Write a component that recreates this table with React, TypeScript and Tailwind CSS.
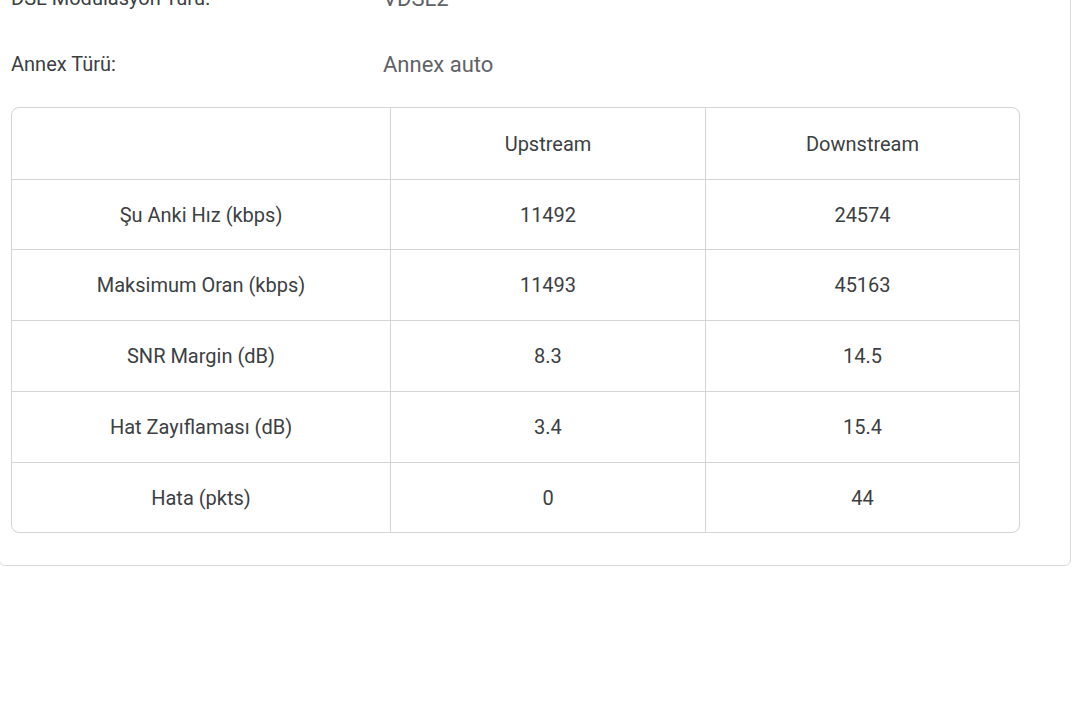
import React from 'react'

const rows: Array<[string, string, string]> = [
  ['Şu Anki Hız (kbps)', '11492', '24574'],
  ['Maksimum Oran (kbps)', '11493', '45163'],
  ['SNR Margin (dB)', '8.3', '14.5'],
  ['Hat Zayıflaması (dB)', '3.4', '15.4'],
  ['Hata (pkts)', '0', '44'],
]

const info: Array<[string, string]> = [
  ['DSL Modülasyon Türü:', 'VDSL2'],
  ['Annex Türü:', 'Annex auto'],
]

const rowH = ['h-[70px]', 'h-[71px]', 'h-[71px]', 'h-[71px]', 'h-[69px]']

export default function App() {
  return (
    <div className="w-[1080px] h-[702px] overflow-hidden bg-white" style={{ fontFamily: 'Roboto, "Liberation Sans", sans-serif' }}>
      <div className="-mt-[36px] -ml-[1px] w-[1072px] border border-[#dadada] rounded-md pl-[11px] pr-[51px] pb-[32px] bg-white">
        {info.map(([label, value]) => (
          <div key={label} className="flex items-center h-[66px]">
            <div className="w-[372px] text-[20px] text-[#3c4043]">{label}</div>
            <div className="text-[22px] text-[#5f6368]">{value}</div>
          </div>
        ))}

        {/* DSL stats */}
        <table className="mt-[10px] w-[1009px] border-separate border-spacing-0 border border-[#d4d4d4] rounded-lg text-[20px] text-[#3c4043] table-fixed">
          <colgroup>
            <col className="w-[379px]" />
            <col className="w-[315px]" />
            <col />
          </colgroup>
          <thead>
            <tr className="h-[72px]">
              <th className="border-r border-b border-[#d4d4d4] font-normal"></th>
              <th className="border-r border-b border-[#d4d4d4] font-normal">Upstream</th>
              <th className="border-b border-[#d4d4d4] font-normal">Downstream</th>
            </tr>
          </thead>
          <tbody>
            {rows.map(([name, up, down], i) => {
              const last = i === rows.length - 1
              return (
                <tr key={name} className={rowH[i]}>
                  <td className={`text-center border-r border-[#d4d4d4] ${last ? '' : 'border-b'}`}>{name}</td>
                  <td className={`text-center border-r border-[#d4d4d4] ${last ? '' : 'border-b'}`}>{up}</td>
                  <td className={`text-center border-[#d4d4d4] ${last ? '' : 'border-b'}`}>{down}</td>
                </tr>
              )
            })}
          </tbody>
        </table>
      </div>
    </div>
  )
}
